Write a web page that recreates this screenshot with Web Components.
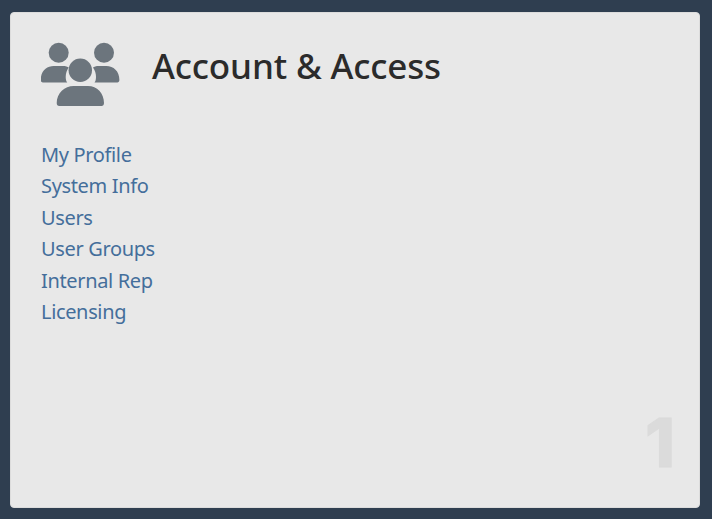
<!DOCTYPE html>
<html>
<head>
<meta charset="utf-8">
<title>Account & Access</title>
<style>
  html, body { margin: 0; height: 100%; background: #2f3e50; }
  body { padding: 12px 12px 11px 10px; box-sizing: border-box; height: 519px; overflow: hidden; font-family: "Noto Sans", "Open Sans", sans-serif; }
</style>
</head>
<body>
<template id="menu-card">
  <style>
    :host {
      display: flex;
      flex-direction: column;
      position: relative;
      height: 100%;
      box-sizing: border-box;
      padding: 20px 30px;
      background-color: #e8e8e8;
      border: 1px solid #dcdcdc;
      border-radius: 4px;
    }
    header {
      display: flex;
      align-items: center;
      gap: 31px;
      height: 74px;
      margin-bottom: 32px;
    }
    h2 {
      margin: -10px 0 0;
      font-size: 35px;
      font-weight: 500;
      letter-spacing: -0.15px;
      color: #2b2b2b;
    }
    nav { display: flex; flex-direction: column; }
    .num {
      position: absolute;
      right: 24px;
      bottom: 31px;
      font: 800 68px/68px Inter, sans-serif;
      -webkit-text-stroke: 1px #dbdbdb;
      color: #dbdbdb;
    }
  </style>
  <header>
    <slot name="icon"></slot>
    <h2><slot name="title"></slot></h2>
  </header>
  <nav><slot></slot></nav>
  <div class="num"><slot name="num"></slot></div>
</template>
<template id="menu-link">
  <style>
    :host { display: block; }
    a {
      display: block;
      font-size: 20px;
      line-height: 31.4px;
      letter-spacing: -0.35px;
      color: #446e9b;
      text-decoration: none;
    }
  </style>
  <a href="#"><slot></slot></a>
</template>

<menu-card>
  <svg slot="icon" viewBox="0 0 80 74" style="display:block;width:80px;height:74px;fill:#6c757d">
    <circle cx="17.700" cy="19.700" r="10"/>
    <circle cx="63" cy="19.700" r="10"/>
    <path d="M-.3 47c0-9 6-14 13-14h9c3 0 5 .6 6 1.500-2 3-3 6-3 9.500 0 2 .5 4.500 1.500 5.500H1.700c-1 0-2-1-2-2.500z"/>
    <path d="M78.400 47c0-9-6-14-13-14h-7.400c-3 0-5 .6-6 1.500 2 3 3 6 3 9.500 0 2-.5 4.500-1.500 5.500H76.400c1 0 2-1 2-2.500z"/>
    <circle cx="39.300" cy="37.300" r="11.700"/>
    <path d="M15.700 70c0-10 8-17 17-17h14.300c9 0 16 7 16 17 0 2-1 3-2.500 3H18.200c-1.500 0-2.500-1-2.500-3z"/>
  </svg>
  <span slot="title">Account &amp; Access</span>
  <menu-link>My Profile</menu-link>
  <menu-link>System Info</menu-link>
  <menu-link>Users</menu-link>
  <menu-link>User Groups</menu-link>
  <menu-link>Internal Rep</menu-link>
  <menu-link>Licensing</menu-link>
  <span slot="num">1</span>
</menu-card>

<script>
  (function() {
    class MenuCard extends HTMLElement {
      constructor() {
        super();
        let shadowRoot = this.attachShadow({mode: 'open'});
        shadowRoot.appendChild(document.querySelector('#menu-card').content.cloneNode(true));
      }
    }
    class MenuLink extends HTMLElement {
      constructor() {
        super();
        let shadowRoot = this.attachShadow({mode: 'open'});
        shadowRoot.appendChild(document.querySelector('#menu-link').content.cloneNode(true));
      }
    }
    customElements.define('menu-card', MenuCard);
    customElements.define('menu-link', MenuLink);
  })();
</script>
</body>
</html>
